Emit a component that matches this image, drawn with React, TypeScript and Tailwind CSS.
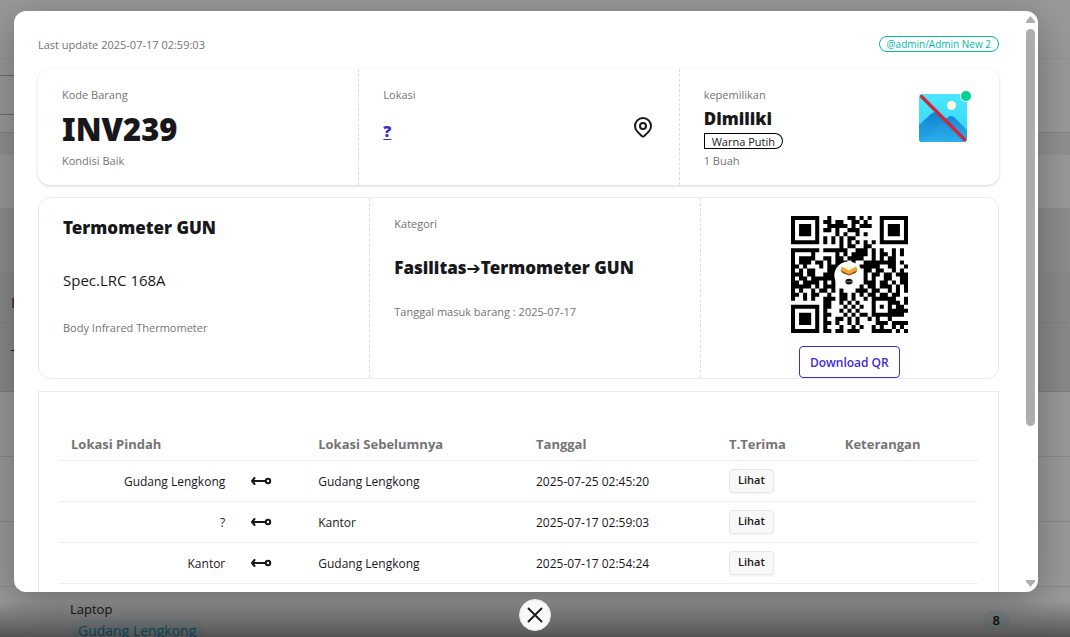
import type { ReactNode } from "react";

interface Movement {
  to: string;
  from: string;
  date: string;
  note: string;
}

const movements: Movement[] = [
  { to: "Gudang Lengkong", from: "Gudang Lengkong", date: "2025-07-25 02:45:20", note: "" },
  { to: "?", from: "Kantor", date: "2025-07-17 02:59:03", note: "" },
  { to: "Kantor", from: "Gudang Lengkong", date: "2025-07-17 02:54:24", note: "" },
];

const qrRows = [
  "#######..#....##.#.#..#######",
  "#.....#.##.##..##.#...#.....#",
  "#.###.#..#####.#.###..#.###.#",
  "#.###.#.##.#..###.....#.###.#",
  "#.###.#....#.#..#.#...#.###.#",
  "#.....#.#.#.#.##......#.....#",
  "#######.#.#.#.#.#.#.#.#######",
  "............#.##..##.........",
  "#######.######..###.#.#..#.#.",
  "#....#.....#.#.####.#.##.#.#.",
  "#.####..##.##.####..#.#.##...",
  "#.###.##.#.###.#..########.#.",
  "##.#...#.####....#####..##..#",
  "#.#.##...###......##.##..#.#.",
  "###.##..####......#.##.##.###",
  "#.##.#######......#.#..##..##",
  "##.####.#.#.......###.##.#.##",
  "#####.#.###......#.##.###.#.#",
  "#.#..#.##.#.#...###.##..#.#.#",
  "##.#.##..#..##.#.#.##.##.##..",
  "#..#.#..###.##.#..#.######..#",
  "........##..#.#.#...#...###.#",
  "#######.##...#.#.#..#.#.#.##.",
  "#.....#.#...#.#.#...#...#####",
  "#.###.#.##...#.#.##.########.",
  "#.###.#.#..##.#.#..#.#..#....",
  "#.###.#.##.#..#.#....###.####",
  "#.....#.#...#..#.#..#.#..#.#.",
  "#######.##.##.###...#####.#.#",
];

const qrPath = qrRows
  .map((row, y) =>
    [...row].map((c, x) => (c === "#" ? `M${x * 4} ${y * 4}h4v4h-4z` : "")).join("")
  )
  .join("");

function QrCode() {
  return (
    <svg viewBox="0 0 116 116" className="size-[117px]" role="img" aria-label="QR">
      <path d={qrPath} fill="#000" />
      <circle cx="57" cy="59" r="14" fill="#fff" />
      <path d="M50.500 50l7 4 7-4 1.500 3.500-8.500 5-8.500-5z" fill="#f4a62a" />
      <path d="M49 53.500l8.500 4.500 8.500-4.500-2 3-6.500 2.500-6.500-2.500z" fill="#8a4a10" />
      <path d="M53 50.500l4.500 3 4.500-3z" fill="#fff3cf" />
      <ellipse cx="57.500" cy="65" rx="3.600" ry="2.900" fill="#111" />
      <path d="M54.500 65h6" stroke="#999" strokeWidth="0.700" />
    </svg>
  );
}

function PinIcon() {
  return (
    <svg className="size-6" fill="none" viewBox="0 0 24 24" stroke="currentColor" strokeWidth="2" strokeLinecap="round" strokeLinejoin="round">
      <path d="M17.657 16.657L13.414 20.900a1.998 1.998 0 01-2.827 0l-4.244-4.243a8 8 0 1111.314 0z" />
      <path d="M15 11a3 3 0 11-6 0 3 3 0 016 0z" />
    </svg>
  );
}

function ArrowIcon() {
  return (
    <svg className="block h-3 w-6" fill="none" viewBox="0 0 24 12" stroke="currentColor" strokeWidth="2">
      <path d="M3 6h13" />
      <path d="M5.500 3L3 6l2.500 3" strokeLinecap="round" strokeLinejoin="round" />
      <circle cx="19" cy="6" r="2.200" />
    </svg>
  );
}

function NoImage() {
  return (
    <svg viewBox="0 0 48 48" className="size-12">
      <defs>
        <linearGradient id="sky" x1="0" y1="0" x2="0" y2="1">
          <stop offset="0" stopColor="#4be6fc" />
          <stop offset="1" stopColor="#35d4f6" />
        </linearGradient>
        <linearGradient id="hill" x1="0" y1="0" x2="0" y2="1">
          <stop offset="0" stopColor="#1583d3" />
          <stop offset="1" stopColor="#25a9e6" />
        </linearGradient>
        <linearGradient id="front" x1="0" y1="0" x2="0" y2="1">
          <stop offset="0" stopColor="#1888d6" />
          <stop offset="1" stopColor="#2bb0ea" />
        </linearGradient>
        <clipPath id="frame">
          <rect width="48" height="48" rx="3" />
        </clipPath>
      </defs>
      <g clipPath="url(#frame)">
        <rect width="48" height="48" fill="url(#sky)" />
        <path d="M0 31l13-12q3-2 6 1l27 28H0z" fill="url(#hill)" />
        <path d="M3 48l26-25q3-2 6 0l13 13v12z" fill="url(#front)" />
        <circle cx="32.500" cy="11.500" r="4.500" fill="#fff6dc" />
      </g>
      <path d="M2.500 2.500l43 43" stroke="#cb2a3e" strokeWidth="3.500" strokeLinecap="round" />
    </svg>
  );
}

function Label({ children }: { children: ReactNode }) {
  return <div className="h-5 text-[11px] leading-5 text-[#747474]">{children}</div>;
}

// list page that sits behind the dialog
function ItemList() {
  return (
    <div className="absolute inset-0 overflow-hidden bg-[#999]" aria-hidden="true">
      <div className="h-[59px] border-b border-[#919191]" />
      <div className="h-[74px] border-b border-[#858585] pt-4">
        <div className="mr-8 h-10 border-y border-[#6c6c6c]" />
      </div>
      <div className="h-[22px] bg-[#909090]" />
      <div className="h-[53px]" />
      <div className="h-[65px] bg-[#8d8d8d]" />
      <div className="h-[50px] border-b border-[#828282] bg-[#898989] pt-5 pl-[11px] text-sm font-bold text-[#3b3b3b]">I</div>
      <div className="h-[69px] border-b border-[#7c7c7c] bg-[#898989] pt-[22px] pl-[11px] text-sm text-[#161616]">T</div>
      <div className="h-[65px] border-b border-[#888]" />
      <div className="h-[65px] border-b border-[#888]" />
      <div className="h-[65px] border-b border-[#888]" />
      <div className="flex h-[65px] items-center justify-between pr-[60px] pl-[70px]">
        <div className="text-[13px] leading-[22px] text-[#161616]">
          <div>Laptop</div>
          <div className="rounded-full bg-[#8f9699] px-2 text-sm leading-[22px] text-[#0e6b85]">Gudang Lengkong</div>
        </div>
        <div className="rounded-full bg-[#8d9596] px-[10px] text-[13px] leading-5 font-semibold text-[#0f1414]">8</div>
      </div>
    </div>
  );
}

function Summary() {
  return (
    <section className="mt-[14px] grid grid-cols-3 rounded-xl shadow-[0_1px_3px_rgba(0,0,0,0.18)]">
      <div className="px-6 pt-4 pb-[14px]">
        <Label>Kode Barang</Label>
        <div className="h-[46px] font-['Noto_Sans',sans-serif] text-[31px] leading-[48px] font-black">INV239</div>
        <Label>Kondisi Baik</Label>
      </div>
      <div className="flex items-center justify-between border-l border-dashed border-[#ddd] px-6 py-4">
        <div className="self-start">
          <Label>Lokasi</Label>
          <a href="#lokasi" className="block pt-3 text-base leading-7 font-extrabold text-[#422ad5] underline underline-offset-2">
            ?
          </a>
        </div>
        <PinIcon />
      </div>
      <div className="flex justify-between border-l border-dashed border-[#ddd] px-6 pt-4 pb-[14px]">
        <div>
          <Label>kepemilikan</Label>
          <div className="h-[46px]">
            <div className="font-['Noto_Sans',sans-serif] text-[17px] leading-7 font-black">Dimiliki</div>
            <span className="block h-4 rounded-l-md rounded-r-full border border-black px-[7px] text-[11px] leading-[15px]">Warna Putih</span>
          </div>
          <Label>1 Buah</Label>
        </div>
        <div className="relative mt-[9px] mr-2 size-12">
          <NoImage />
          <span className="absolute -top-1 -right-[5px] size-3 rounded-full border border-white bg-[#00d390]" />
        </div>
      </div>
    </section>
  );
}

function Detail() {
  return (
    <section className="mt-3 grid grid-cols-[331fr_331fr_299fr] rounded-xl border border-[#ebebeb]">
      <div className="px-6 pt-4">
        <h2 className="font-['Noto_Sans',sans-serif] text-[17px] leading-7 font-black">Termometer GUN</h2>
        <p className="mt-6 text-[15px] leading-7">Spec.LRC 168A</p>
        <div className="mt-6">
          <Label>Body Infrared Thermometer</Label>
        </div>
      </div>
      <div className="border-l border-dashed border-[#ddd] px-6 pt-4">
        <Label>Kategori</Label>
        <h2 className="mt-5 font-['Noto_Sans',sans-serif] text-[17px] leading-7 font-black">
          Fasilitas<span className="font-[DejaVu_Sans]">➔</span>Termometer GUN
        </h2>
        <div className="mt-5">
          <Label>Tanggal masuk barang : 2025-07-17</Label>
        </div>
      </div>
      <div className="flex flex-col items-center border-l border-dashed border-[#ddd] pt-[18px]">
        <QrCode />
        <button type="button" className="mt-[13px] h-8 rounded border border-[#422ad5] px-[10px] pt-0.5 text-xs font-semibold text-[#422ad5]">
          Download QR
        </button>
      </div>
    </section>
  );
}

function History() {
  return (
    <section className="mt-3 border border-[#ebebeb] px-5 pt-9 pb-10">
      <table className="w-full table-fixed text-left">
        <colgroup>
          <col className="w-[19.4%]" />
          <col className="w-[7.5%]" />
          <col className="w-[23.7%]" />
          <col className="w-[21%]" />
          <col className="w-[12.6%]" />
          <col className="w-[15.8%]" />
        </colgroup>
        <thead className="text-[13px] text-[#747474]">
          <tr className="h-8 border-b border-[#efefef]">
            <th colSpan={2} className="px-3 pt-0.5 font-bold">Lokasi Pindah</th>
            <th className="px-3 pt-0.5 font-bold">Lokasi Sebelumnya</th>
            <th className="px-3 pt-0.5 font-bold">Tanggal</th>
            <th className="px-3 pt-0.5 font-bold">T.Terima</th>
            <th className="px-3 pt-0.5 font-bold">Keterangan</th>
          </tr>
        </thead>
        <tbody className="text-xs">
          {movements.map((m) => (
            <tr key={m.date} className="h-[41px] border-b border-[#efefef]">
              <td className="px-3 pt-0.5 text-right">{m.to}</td>
              <td className="px-3"><ArrowIcon /></td>
              <td className="px-3 pt-0.5">{m.from}</td>
              <td className="px-3 pt-0.5">{m.date}</td>
              <td className="px-3">
                <button type="button" className="block h-6 rounded border border-[#e6e6e6] bg-[#f8f8f8] px-2 text-[11px] font-semibold shadow-xs">
                  Lihat
                </button>
              </td>
              <td className="px-3 pt-0.5">{m.note}</td>
            </tr>
          ))}
        </tbody>
      </table>
    </section>
  );
}

function ScrollTrack() {
  return (
    <div className="flex w-[15px] shrink-0 flex-col items-center py-[5px]" aria-hidden="true">
      <svg viewBox="0 0 9 7" className="h-[7px] w-[9px]">
        <path d="M4.500 0L9 5.500V7H0V5.500z" fill="#adadad" />
      </svg>
      <div className="mt-[6px] mb-auto h-[69.5%] w-[9px] rounded-full bg-[#adadad]" />
      <svg viewBox="0 0 9 7" className="h-[7px] w-[9px]">
        <path d="M4.500 7L9 1.500V0H0v1.500z" fill="#adadad" />
      </svg>
    </div>
  );
}

export default function App() {
  return (
    <div className="relative h-screen overflow-hidden font-['Open_Sans','Noto_Sans',sans-serif] text-[#18181b]">
      <ItemList />
      <div className="absolute inset-x-0 bottom-0 h-9 bg-linear-to-b from-transparent to-black/45" />

      <div className="relative flex h-full flex-col items-center pt-[11px] pb-[6px]">
        <div className="flex min-h-0 w-full flex-1 justify-center pr-[18px]">
          <div role="dialog" aria-label="Termometer GUN" className="flex w-full max-w-5xl overflow-hidden rounded-xl bg-white shadow-[0_10px_40px_rgba(0,0,0,0.3)]">
            <div className="min-w-0 flex-1 overflow-y-auto p-6 [scrollbar-width:none]">
              <div className="flex items-start justify-between">
                <Label>Last update 2025-07-17 02:59:03</Label>
                <span className="mt-px h-4 rounded-full border border-[#00bba7] px-[7px] text-[10px] leading-[15px] text-[#00bba7]">
                  @admin/Admin New 2
                </span>
              </div>
              <Summary />
              <Detail />
              <History />
            </div>
            <ScrollTrack />
          </div>
        </div>
        <button type="button" aria-label="Close" className="mt-[7px] flex size-8 shrink-0 items-center justify-center rounded-full border border-[#e5e5e5] bg-[#f8f8f8]">
          <svg viewBox="0 0 16 16" className="size-4" stroke="currentColor" strokeWidth="1.800" strokeLinecap="round">
            <path d="M1.500 1.500l13 13M14.500 1.500l-13 13" />
          </svg>
        </button>
      </div>
    </div>
  );
}
